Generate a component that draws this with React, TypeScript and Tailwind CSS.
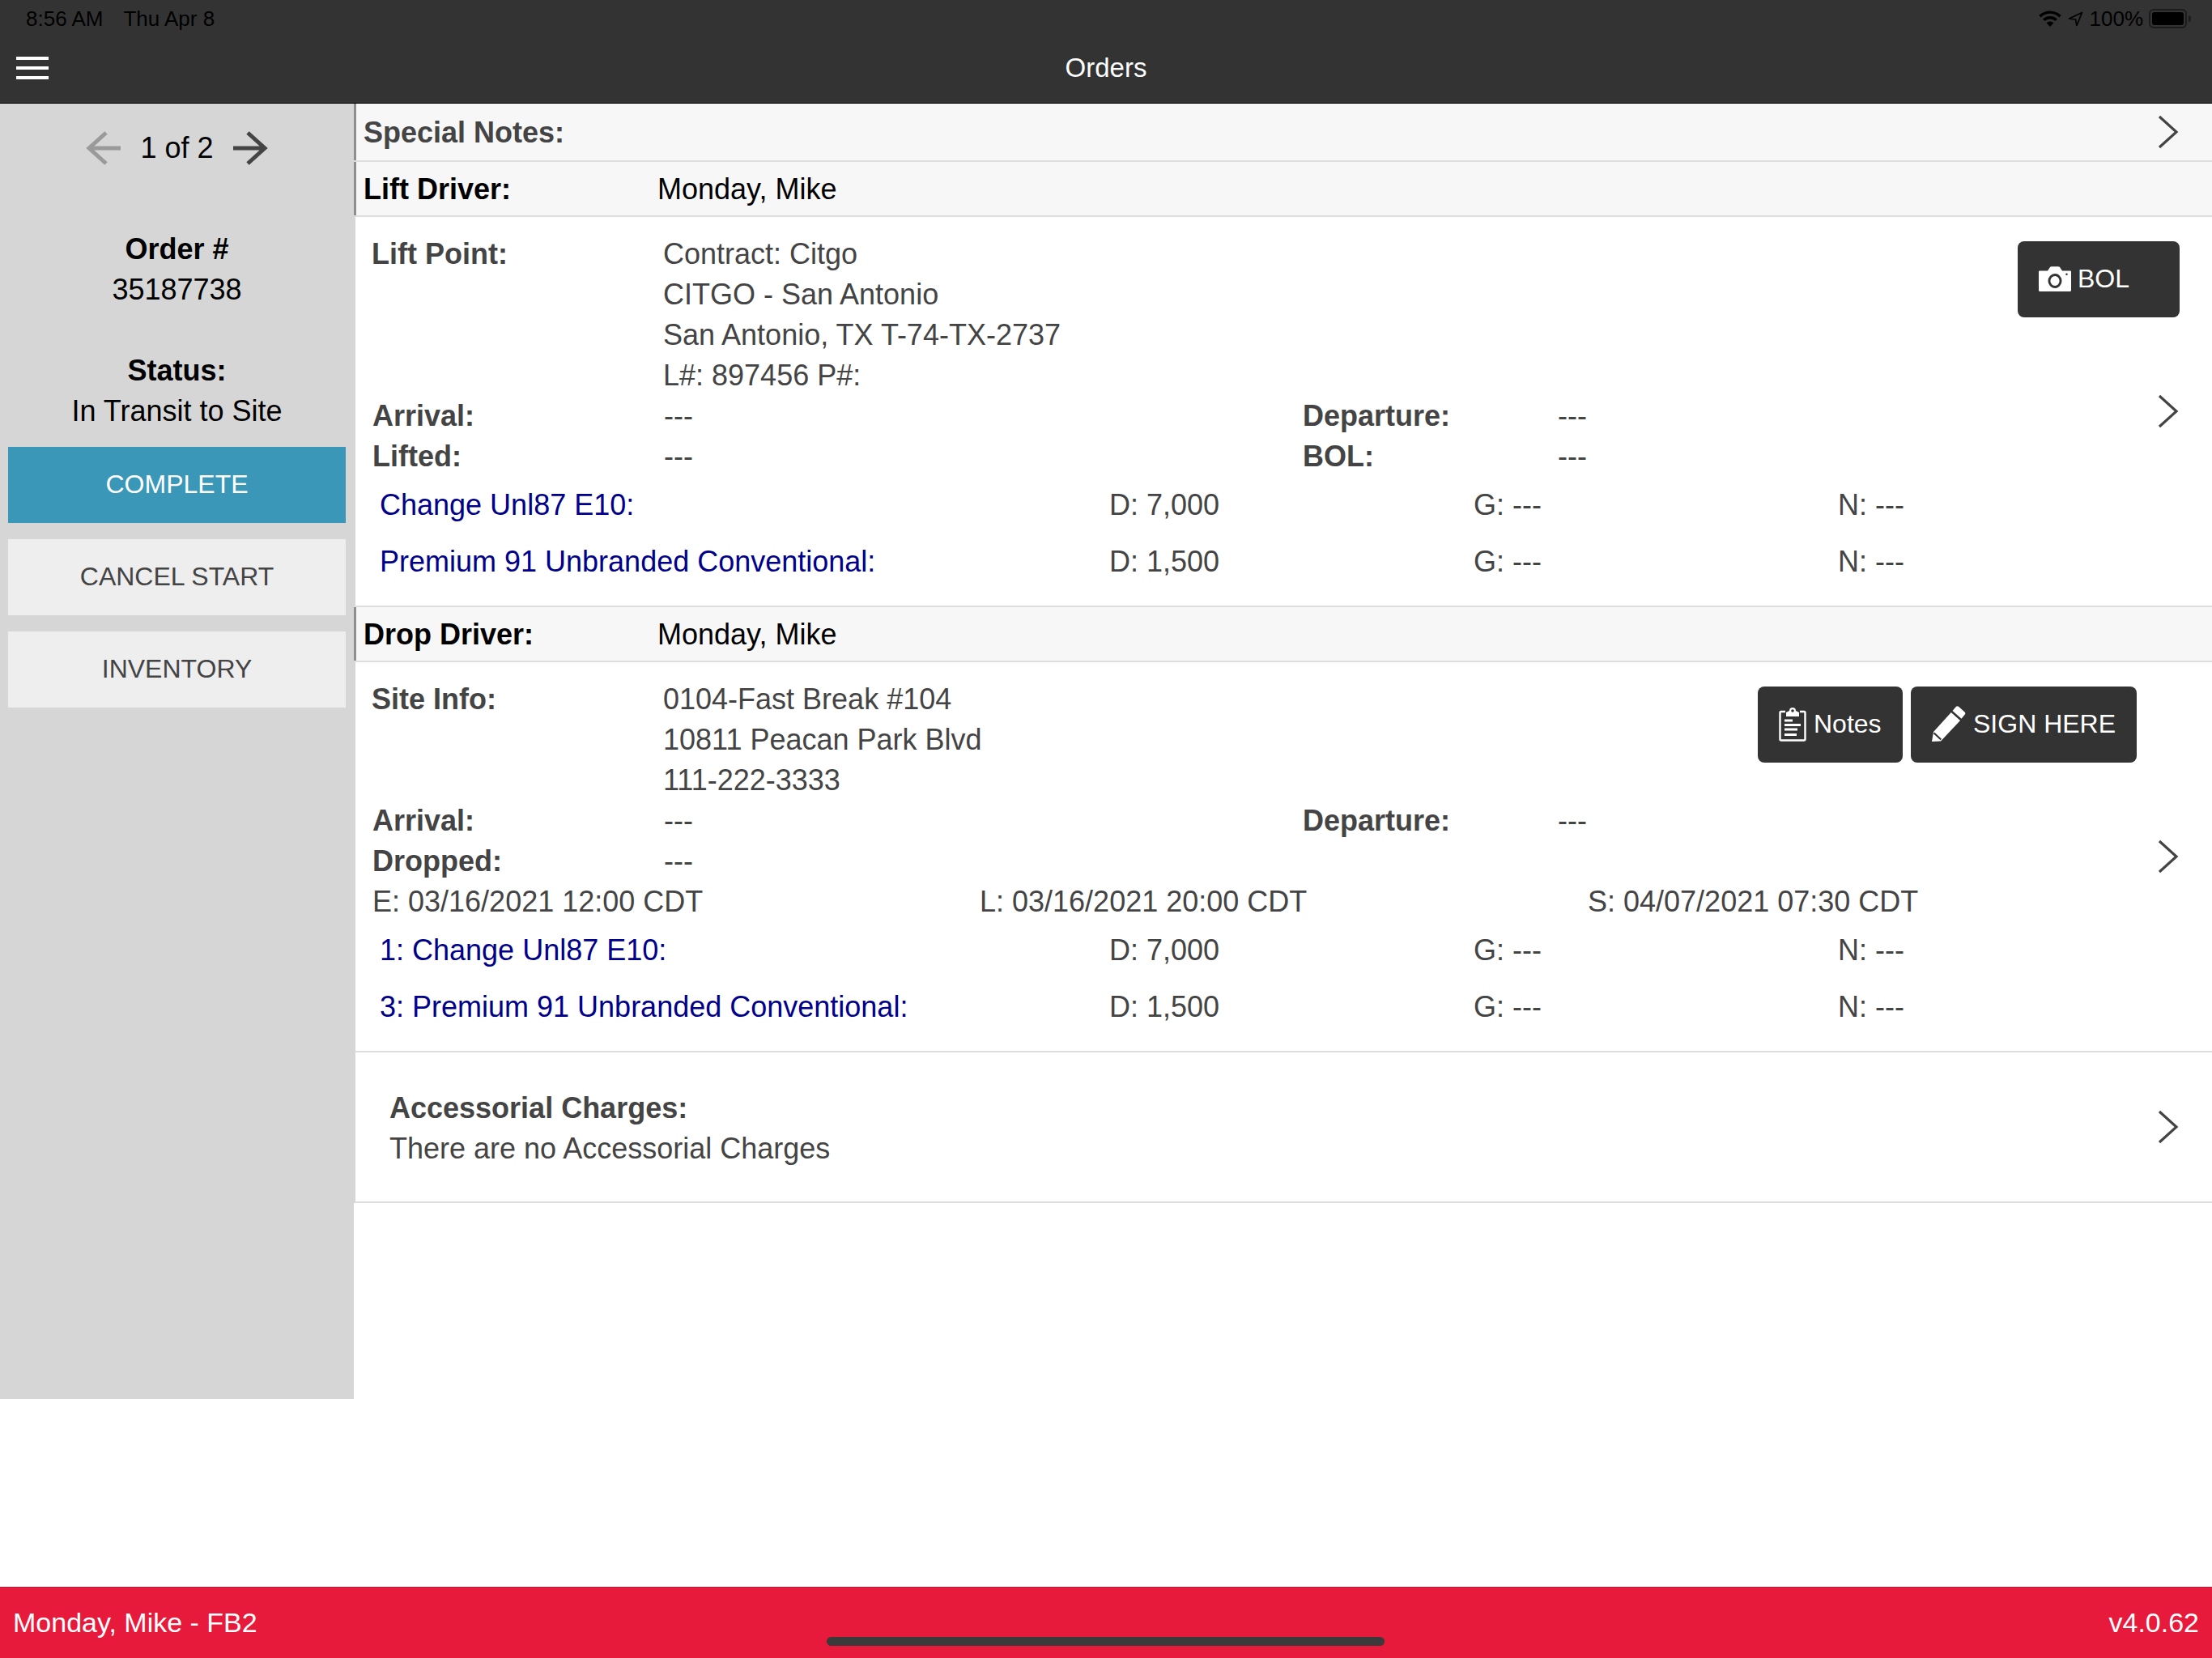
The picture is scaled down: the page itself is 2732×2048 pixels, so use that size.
const font = { fontFamily: '"Liberation Sans", Arial, sans-serif' };

function Chevron() {
  return (
    <div className="[grid-area:1/1] justify-self-end self-center mr-[41px]">
      <svg width="26" height="42" viewBox="0 0 26 42" className="block">
        <path d="M2 2 L23 21 L2 40" fill="none" stroke="#444" strokeWidth="3.2" />
      </svg>
    </div>
  );
}

function Arrow({ dir, color }: { dir: "left" | "right"; color: string }) {
  return (
    <svg width="44" height="42" viewBox="0 0 44 42" className={dir === "left" ? "block" : "block rotate-180"}>
      <path d="M25 2 L4 21 L25 40 M4 21 H43" fill="none" stroke={color} strokeWidth="5" />
    </svg>
  );
}

function CameraIcon() {
  return (
    <svg width="40" height="31" viewBox="0 0 40 31" className="block shrink-0">
      <path
        fillRule="evenodd"
        fill="#fff"
        d="M1 5.5 H11 L14 1 Q14.5 0.2 16 0.2 H24 Q25.5 0.2 26 1 L29 5.5 H39 Q40 5.5 40 6.5 V29.5 Q40 31 38.5 31 H1.5 Q0 31 0 29.5 V6.5 Q0 5.5 1 5.5 Z M20 9 A8.5 9 0 1 0 20.01 27 A8.5 9 0 1 0 20 9 Z M20 12 A5.6 6 0 1 1 19.99 24 A5.6 6 0 1 1 20 12 Z M34.5 8.5 A1.3 1.3 0 1 0 34.51 11.1 A1.3 1.3 0 1 0 34.5 8.5 Z"
      />
    </svg>
  );
}

function NotesIcon() {
  return (
    <svg width="34" height="43" viewBox="0 0 34 43" className="block shrink-0">
      <path d="M8 6 H3 Q1.5 6 1.5 7.5 V40 Q1.5 41.5 3 41.5 H31 Q32.5 41.5 32.5 40 V7.5 Q32.5 6 31 6 H26" fill="none" stroke="#fff" strokeWidth="2.4" />
      <path fillRule="evenodd" fill="#fff" d="M9 12 V7 L13 5 A4 4 0 0 1 21 5 L25 7 V12 Z M17 3.2 A1.8 1.8 0 1 0 17.01 6.8 A1.8 1.8 0 1 0 17 3.2 Z" />
      <path fill="#fff" d="M7 15.5 H17 V18.5 H7 Z M7 21 H27 V24 H7 Z M7 26.5 H23 V29.5 H7 Z M7 33 H22 V36 H7 Z" />
    </svg>
  );
}

function PencilIcon() {
  return (
    <svg width="43" height="44" viewBox="0 0 43 44" className="block shrink-0">
      <path fill="#fff" d="M31 0.8 Q32.5 -0.4 34 0.8 L41.5 7.5 Q43 9 41.8 10.5 L37.5 15.8 L26.5 6 Z" />
      <path fill="#fff" d="M24.8 8 L36 18 L12 43.5 L1 44 L3 32 Z" />
      <path fill="#333" d="M4.2 32.6 L13 40.8 L11.6 42.2 L2.9 34.2 Z" />
    </svg>
  );
}

function StatusIcons() {
  return (
    <div className="flex items-center">
      <svg width="28" height="20" viewBox="0 0 28 20" className="block">
        <path d="M1.5 7.2 A18 18 0 0 1 26.5 7.2 M6.2 11.7 A11.6 11.6 0 0 1 21.8 11.7" fill="none" stroke="#000" strokeWidth="3.4" />
        <path d="M9.5 15.2 A7 7 0 0 1 18.5 15.2 L14 20 Z" fill="#000" />
      </svg>
      <svg width="19" height="19" viewBox="0 0 19 19" className="block ml-[8px]">
        <path d="M17.5 1.5 L1.5 9 L9.5 10 L11 17.5 Z" fill="none" stroke="#000" strokeWidth="1.7" strokeLinejoin="round" />
      </svg>
      <span className="ml-[8px] text-[26px] leading-none text-black">100%</span>
      <div className="ml-[7px] w-[47px] h-[24px] rounded-[6px] border-2 border-[#1c1c1c] p-[2px]">
        <div className="w-full h-full rounded-[3px] bg-black" />
      </div>
      <div className="w-[3px] h-[8px] ml-[2px] rounded-r-full bg-[#1c1c1c]" />
    </div>
  );
}

function SideButton({ label, primary }: { label: string; primary?: boolean }) {
  return (
    <button
      className={
        primary
          ? "h-[94px] w-full pb-[2px] text-[32px] bg-[#3b97b8] text-white"
          : "h-[94px] w-full pb-[2px] text-[32px] bg-[#eeeeee] text-[#444444]"
      }
    >
      {label}
    </button>
  );
}

function HeaderRow({ label, value, dark }: { label: string; value?: string; dark?: boolean }) {
  return (
    <div className="flex items-center border-l-[3px] border-l-[#8f8f8f] pl-[9px] pt-[2px] h-full bg-[#f7f7f7]">
      <span className={dark ? "w-[363px] font-bold text-black" : "font-bold text-[#444444]"}>{label}</span>
      {value && <span className="text-black">{value}</span>}
    </div>
  );
}

function TimeRow({ a, b, c, d }: { a: string; b: string; c: string; d: string }) {
  return (
    <div className="grid grid-cols-[360px_789px_315px_1fr] leading-[50px]">
      <span className="font-bold">{a}</span>
      <span>{b}</span>
      <span className="font-bold">{c}</span>
      <span>{d}</span>
    </div>
  );
}

function ProductRow({ name, d }: { name: string; d: string }) {
  return (
    <div className="grid grid-cols-[901px_450px_450px_1fr] items-center h-[70px] pl-[9px]">
      <span className="text-[#00008b]">{name}</span>
      <span>D: {d}</span>
      <span>G: ---</span>
      <span>N: ---</span>
    </div>
  );
}

function DarkButton({ children, className }: { children: React.ReactNode; className: string }) {
  return (
    <button className={"h-[94px] pb-[2px] rounded-[8px] bg-[#333333] text-white text-[32px] flex items-center " + className}>
      {children}
    </button>
  );
}

export default function App() {
  return (
    <div className="relative flex flex-col w-[2732px] h-[2048px] bg-white text-[36px] text-[#444444]" style={font}>
      <header className="h-[128px] shrink-0 bg-[#333333] border-b border-black">
        <div className="flex items-center justify-between h-[46px] pl-[32px] pr-[26px] text-[26px] text-black">
          <div className="flex gap-[25px]">
            <span>8:56 AM</span>
            <span>Thu Apr 8</span>
          </div>
          <StatusIcons />
        </div>
        <div className="relative flex items-center justify-center h-[76px]">
          <div className="absolute left-[20px] top-[24px] flex flex-col gap-[8px] w-[40px]">
            <div className="h-[4px] bg-white" />
            <div className="h-[4px] bg-white" />
            <div className="h-[4px] bg-white" />
          </div>
          <span className="text-[33px] text-white">Orders</span>
        </div>
      </header>

      <div className="flex flex-1 min-h-0">
        <aside className="w-[437px] shrink-0 h-[1600px] bg-[#d6d6d6] px-[10px] flex flex-col">
          <div className="flex items-center justify-center h-[110px] text-[#333333]">
            <Arrow dir="left" color="#9a9a9a" />
            <span className="mx-[23px] text-[36px] text-black">1 of 2</span>
            <Arrow dir="right" color="#444444" />
          </div>
          <div className="flex flex-col items-center mt-[45px] text-black leading-[50px]">
            <span className="font-bold">Order #</span>
            <span>35187738</span>
            <span className="font-bold mt-[50px]">Status:</span>
            <span>In Transit to Site</span>
          </div>
          <div className="flex flex-col gap-[20px] mt-[19px]">
            <SideButton label="COMPLETE" primary />
            <SideButton label="CANCEL START" />
            <SideButton label="INVENTORY" />
          </div>
        </aside>

        <main className="flex-1 min-w-0">
          <section className="grid h-[72px] border-b-2 border-[#dddddd]">
            <div className="[grid-area:1/1]">
              <HeaderRow label="Special Notes:" />
            </div>
            <Chevron />
          </section>
          <div className="h-[68px] border-b-2 border-[#dddddd]">
            <HeaderRow label="Lift Driver:" value="Monday, Mike" dark />
          </div>

          <section className="grid h-[480px] border-l-2 border-[#d6d6d6]">
            <div className="[grid-area:1/1] pl-[21px] pt-[21px]">
              <div className="flex">
                <span className="w-[359px] font-bold leading-[50px] -ml-px">Lift Point:</span>
                <div className="flex-1 flex flex-col leading-[50px] ml-px">
                  <span>Contract: Citgo</span>
                  <span>CITGO - San Antonio</span>
                  <span>San Antonio, TX T-74-TX-2737</span>
                  <span>L#: 897456 P#:</span>
                </div>
                <DarkButton className="mt-[9px] mr-[40px] w-[200px] pl-[26px] gap-[8px]">
                  <CameraIcon />
                  BOL
                </DarkButton>
              </div>
              <TimeRow a="Arrival:" b="---" c="Departure:" d="---" />
              <TimeRow a="Lifted:" b="---" c="BOL:" d="---" />
              <ProductRow name="Change Unl87 E10:" d="7,000" />
              <ProductRow name="Premium 91 Unbranded Conventional:" d="1,500" />
            </div>
            <Chevron />
          </section>

          <div className="h-[70px] border-y-2 border-[#dddddd]">
            <HeaderRow label="Drop Driver:" value="Monday, Mike" dark />
          </div>

          <section className="grid h-[482px] border-l-2 border-l-[#d6d6d6] border-b-2 border-b-[#dddddd]">
            <div className="[grid-area:1/1] pl-[21px] pt-[21px]">
              <div className="flex">
                <span className="w-[359px] font-bold leading-[50px] -ml-px">Site Info:</span>
                <div className="flex-1 flex flex-col leading-[50px] ml-px">
                  <span>0104-Fast Break #104</span>
                  <span>10811 Peacan Park Blvd</span>
                  <span>111-222-3333</span>
                </div>
                <div className="flex gap-[10px] mt-[9px] mr-[93px]">
                  <DarkButton className="w-[179px] pl-[26px] gap-[9px]">
                    <NotesIcon />
                    Notes
                  </DarkButton>
                  <DarkButton className="w-[279px] pl-[25px] gap-[9px]">
                    <PencilIcon />
                    SIGN HERE
                  </DarkButton>
                </div>
              </div>
              <TimeRow a="Arrival:" b="---" c="Departure:" d="---" />
              <TimeRow a="Dropped:" b="---" c="" d="" />
              <div className="grid grid-cols-[750px_751px_1fr] leading-[50px]">
                <span>E: 03/16/2021 12:00 CDT</span>
                <span>L: 03/16/2021 20:00 CDT</span>
                <span>S: 04/07/2021 07:30 CDT</span>
              </div>
              <ProductRow name="1: Change Unl87 E10:" d="7,000" />
              <ProductRow name="3: Premium 91 Unbranded Conventional:" d="1,500" />
            </div>
            <Chevron />
          </section>

          <section className="grid h-[186px] border-l-2 border-l-[#d6d6d6] border-b-2 border-b-[#dddddd]">
            <div className="[grid-area:1/1] self-center pt-[3px] pl-[42px] flex flex-col leading-[50px]">
              <span className="font-bold">Accessorial Charges:</span>
              <span>There are no Accessorial Charges</span>
            </div>
            <Chevron />
          </section>
        </main>
      </div>

      <footer className="h-[88px] shrink-0 flex items-center justify-between bg-[#e81a3b] border-t border-[#b91c3a] pl-[16px] pr-[16px] text-[34px] text-white">
        <span>Monday, Mike - FB2</span>
        <span>v4.0.62</span>
      </footer>
      <div className="absolute left-[1021px] top-[2022px] w-[689px] h-[11px] rounded-full bg-[#3a3a3a]" />
    </div>
  );
}
